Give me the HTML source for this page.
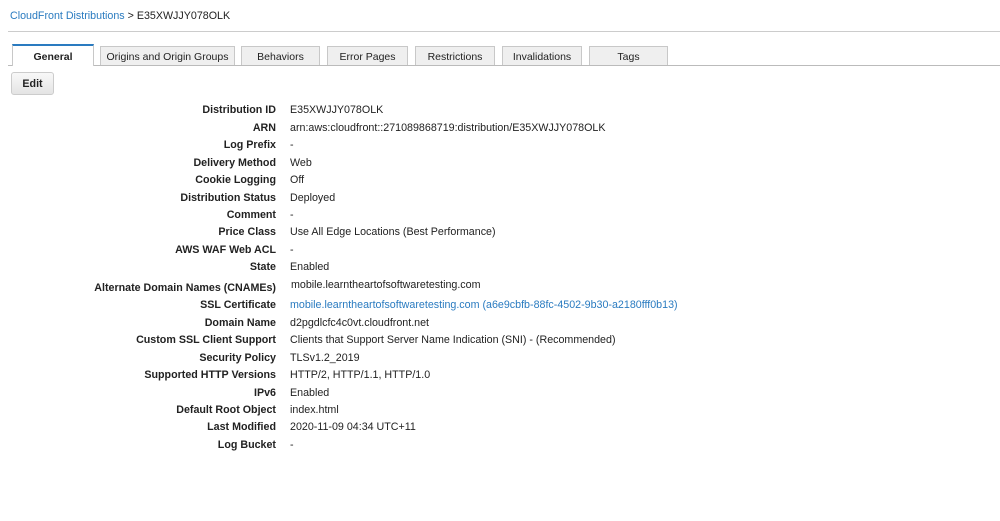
<!DOCTYPE html>
<html><head><style>
body{margin:0;background:#fff;font-family:"Liberation Sans",Arial,sans-serif;font-size:10.7px;color:#222;}
.bc{position:absolute;left:10px;top:10px;font-size:10.7px}
.bc a{color:#2a7bc0;text-decoration:none}
.sep{position:absolute;left:8px;right:0;top:31px;border-top:1px solid #ccc}
.tabline{position:absolute;left:8px;right:0;top:65px;border-top:1px solid #bbb}
.tab{position:absolute;top:46px;height:19px;background:#efefef;border:1px solid #c8c8c8;border-bottom:none;text-align:center;line-height:20px;font-size:10.5px;box-sizing:border-box}
.tab.act{background:#fff;border-top:2px solid #2a7bc0;top:44px;height:22px;line-height:22px;font-weight:bold;z-index:2}
.edit{position:absolute;left:11px;top:72px;width:43px;height:23px;box-sizing:border-box;border:1px solid #ccc;border-radius:3px;background:linear-gradient(#f8f8f8,#e4e4e4);font-weight:bold;text-align:center;line-height:22px}
.r{position:absolute;left:0;width:1000px;height:14px}
.l{position:absolute;right:724px;font-weight:bold;white-space:nowrap}
.v{position:absolute;left:290px;white-space:nowrap}
.v a{color:#2a7bc0;text-decoration:none}
</style></head><body>
<div class="bc"><a>CloudFront Distributions</a> &gt; E35XWJJY078OLK</div>
<div class="sep"></div>
<div class="tabline"></div>
<div class="tab act" style="left:12px;width:82px">General</div>
<div class="tab" style="left:100px;width:135px">Origins and Origin Groups</div>
<div class="tab" style="left:241px;width:79px">Behaviors</div>
<div class="tab" style="left:327px;width:81px">Error Pages</div>
<div class="tab" style="left:415px;width:80px">Restrictions</div>
<div class="tab" style="left:502px;width:80px">Invalidations</div>
<div class="tab" style="left:589px;width:79px">Tags</div>
<div class="edit">Edit</div>
<div class="r" style="top:104px"><span class="l">Distribution ID</span><span class="v">E35XWJJY078OLK</span></div>
<div class="r" style="top:122px"><span class="l">ARN</span><span class="v">arn:aws:cloudfront::271089868719:distribution/E35XWJJY078OLK</span></div>
<div class="r" style="top:139px"><span class="l">Log Prefix</span><span class="v">-</span></div>
<div class="r" style="top:157px"><span class="l">Delivery Method</span><span class="v">Web</span></div>
<div class="r" style="top:174px"><span class="l">Cookie Logging</span><span class="v">Off</span></div>
<div class="r" style="top:192px"><span class="l">Distribution Status</span><span class="v">Deployed</span></div>
<div class="r" style="top:209px"><span class="l">Comment</span><span class="v">-</span></div>
<div class="r" style="top:226px"><span class="l">Price Class</span><span class="v">Use All Edge Locations (Best Performance)</span></div>
<div class="r" style="top:244px"><span class="l">AWS WAF Web ACL</span><span class="v">-</span></div>
<div class="r" style="top:261px"><span class="l">State</span><span class="v">Enabled</span></div>
<div class="r" style="top:282px"><span class="l">Alternate Domain Names (CNAMEs)</span></div>
<div class="r" style="top:279px"><span class="v" style="left:291px">mobile.learntheartofsoftwaretesting.com</span></div>
<div class="r" style="top:299px"><span class="l">SSL Certificate</span><span class="v"><a>mobile.learntheartofsoftwaretesting.com (a6e9cbfb-88fc-4502-9b30-a2180fff0b13)</a></span></div>
<div class="r" style="top:317px"><span class="l">Domain Name</span><span class="v">d2pgdlcfc4c0vt.cloudfront.net</span></div>
<div class="r" style="top:334px"><span class="l">Custom SSL Client Support</span><span class="v">Clients that Support Server Name Indication (SNI) - (Recommended)</span></div>
<div class="r" style="top:352px"><span class="l">Security Policy</span><span class="v">TLSv1.2_2019</span></div>
<div class="r" style="top:369px"><span class="l">Supported HTTP Versions</span><span class="v">HTTP/2, HTTP/1.1, HTTP/1.0</span></div>
<div class="r" style="top:387px"><span class="l">IPv6</span><span class="v">Enabled</span></div>
<div class="r" style="top:404px"><span class="l">Default Root Object</span><span class="v">index.html</span></div>
<div class="r" style="top:421px"><span class="l">Last Modified</span><span class="v">2020-11-09 04:34 UTC+11</span></div>
<div class="r" style="top:439px"><span class="l">Log Bucket</span><span class="v">-</span></div>
</body></html>
